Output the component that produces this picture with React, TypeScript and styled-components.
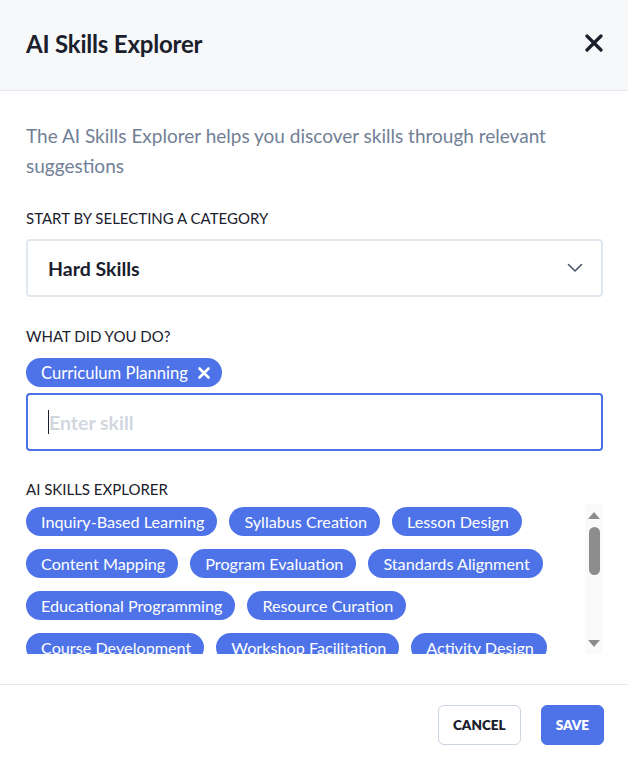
import React from "react";
import styled, { createGlobalStyle } from "styled-components";

const GlobalStyle = createGlobalStyle`
  html, body { margin: 0; padding: 0; background: #ffffff; }
  body { font-family: Lato, "Liberation Sans", sans-serif; color: #1a202c; }
  * { box-sizing: border-box; }
`;

const BLUE = "#4e73e8";

const Modal = styled.div`
  width: 628px;
  min-height: 760px;
  display: flex;
  flex-direction: column;
  background: #fff;
`;

const Header = styled.header`
  height: 91px;
  background: #f7f8fa;
  border-bottom: 1px solid #e2e8f0;
  display: flex;
  align-items: center;
  justify-content: space-between;
  padding: 0 25px 4px 26px;
`;

const Title = styled.h1`
  margin: 0;
  font-size: 24px;
  font-weight: 700;
  color: #1a202c;
  letter-spacing: -0.2px;
`;

const CloseButton = styled.button`
  border: 0;
  background: none;
  padding: 0;
  width: 18px;
  height: 18px;
  display: flex;
  color: #1a202c;
  cursor: pointer;
`;

const Body = styled.main`
  padding: 30px 25px 30px 26px;
  display: flex;
  flex-direction: column;
  border-bottom: 1px solid #e2e8f0;
`;

const Description = styled.p`
  margin: 0 0 27px;
  font-size: 19px;
  line-height: 30px;
  color: #718096;
`;

const Label = styled.div<{ $gap: number }>`
  font-size: 15px;
  line-height: 20px;
  text-transform: uppercase;
  color: #1a202c;
  margin-bottom: ${(p) => p.$gap}px;
`;

const Select = styled.div`
  height: 58px;
  border: 2px solid #e2e8f0;
  border-radius: 4px;
  display: flex;
  align-items: center;
  justify-content: space-between;
  padding: 0 18px 0 20px;
  margin-bottom: 29px;
  font-size: 19.5px;
  font-weight: 700;
  color: #1a202c;
`;

const Chevron = styled.svg`
  width: 16px;
  height: 16px;
  color: #4a5568;
`;

const TagRow = styled.div`
  display: flex;
  margin-bottom: 6px;
`;

const Chip = styled.span<{ $removable?: boolean }>`
  display: inline-flex;
  align-items: center;
  gap: 9px;
  height: 29px;
  padding: 0 ${(p) => (p.$removable ? 11 : 13)}px 0 15px;
  border-radius: 15px;
  background: ${BLUE};
  color: #fff;
  font-size: ${(p) => (p.$removable ? 16.6 : 16.2)}px;
  white-space: nowrap;
`;

const RemoveIcon = styled.svg`
  width: 14px;
  height: 14px;
`;

const InputBox = styled.label`
  height: 58px;
  border: 2px solid #4a72e0;
  border-radius: 4px;
  display: flex;
  align-items: center;
  padding: 0 20px;
  margin-bottom: 28px;
`;

const Caret = styled.span`
  width: 1px;
  height: 24px;
  background: #1a202c;
  flex: none;
`;

const Input = styled.input`
  flex: 1;
  border: 0;
  outline: none;
  padding: 0;
  font-family: inherit;
  font-size: 19.5px;
  font-weight: 700;
  color: #1a202c;
  caret-color: transparent;
  background: transparent;
  &::placeholder { color: #d2d7df; }
`;

const SuggestionRow = styled.div`
  display: flex;
  height: 150px;
  margin-top: -15px;
`;

const ChipViewport = styled.div`
  flex: 1;
  overflow: hidden;
  padding-top: 3px;
  margin-right: 1px;
`;

const ChipGrid = styled.div`
  display: flex;
  flex-wrap: wrap;
  column-gap: 12px;
  row-gap: 13px;
`;

const ScrollTrack = styled.div`
  width: 18px;
  flex: none;
  background: #fafafa;
  display: flex;
  flex-direction: column;
  align-items: center;
  padding: 8px 0 7px;
`;

const Arrow = styled.span<{ $down?: boolean }>`
  width: 0;
  height: 0;
  border-left: 6px solid transparent;
  border-right: 6px solid transparent;
  ${(p) =>
    p.$down
      ? "border-top: 7px solid #8d8d8d; margin-top: auto;"
      : "border-bottom: 7px solid #8d8d8d;"}
`;

const Thumb = styled.span`
  width: 11px;
  height: 48px;
  margin-top: 8px;
  border-radius: 6px;
  background: #8d8d8d;
`;

const Footer = styled.footer`
  display: flex;
  justify-content: flex-end;
  gap: 20px;
  padding: 20px 24px 20px 26px;
`;

const Button = styled.button<{ $primary?: boolean }>`
  height: 40px;
  padding: 0 14px;
  border-radius: 6px;
  border: 1px solid ${(p) => (p.$primary ? BLUE : "#cbd5e0")};
  background: ${(p) => (p.$primary ? BLUE : "#fff")};
  color: ${(p) => (p.$primary ? "#fff" : "#1a202c")};
  font-family: inherit;
  font-size: 13.5px;
  font-weight: 800;
  letter-spacing: 0;
  text-transform: uppercase;
  cursor: pointer;
`;

const suggestions = [
  "Inquiry-Based Learning",
  "Syllabus Creation",
  "Lesson Design",
  "Content Mapping",
  "Program Evaluation",
  "Standards Alignment",
  "Educational Programming",
  "Resource Curation",
  "Course Development",
  "Workshop Facilitation",
  "Activity Design",
  "Assessment Design",
  "Learning Outcomes",
];

export default function App() {
  return (
    <>
      <GlobalStyle />
      <Modal>
        <Header>
          <Title>AI Skills Explorer</Title>
          <CloseButton aria-label="Close">
            <svg viewBox="0 0 18 18" width="18" height="18">
              <path d="M2 2 L16 16 M16 2 L2 16" stroke="currentColor" strokeWidth="3.2" strokeLinecap="round" />
            </svg>
          </CloseButton>
        </Header>
        <Body>
          <Description>
            The AI Skills Explorer helps you discover skills through relevant suggestions
          </Description>
          <Label $gap={11}>Start by selecting a category</Label>
          <Select>
            <span>Hard Skills</span>
            <Chevron viewBox="0 0 16 16">
              <path d="M1.5 4.5 L8 11 L14.5 4.5" fill="none" stroke="currentColor" strokeWidth="1.6" strokeLinecap="round" strokeLinejoin="round" />
            </Chevron>
          </Select>
          <Label $gap={12}>What did you do?</Label>
          <TagRow>
            <Chip $removable>
              Curriculum Planning
              <RemoveIcon viewBox="0 0 14 14">
                <path d="M2.5 2.5 L11.5 11.5 M11.5 2.5 L2.5 11.5" stroke="currentColor" strokeWidth="2.6" strokeLinecap="round" />
              </RemoveIcon>
            </Chip>
          </TagRow>
          <InputBox>
            <Caret />
            <Input placeholder="Enter skill" />
          </InputBox>
          <Label $gap={20}>AI Skills Explorer</Label>
          <SuggestionRow>
            <ChipViewport>
              <ChipGrid>
                {suggestions.map((s) => (
                  <Chip key={s}>{s}</Chip>
                ))}
              </ChipGrid>
            </ChipViewport>
            <ScrollTrack aria-hidden>
              <Arrow />
              <Thumb />
              <Arrow $down />
            </ScrollTrack>
          </SuggestionRow>
        </Body>
        <Footer>
          <Button>Cancel</Button>
          <Button $primary>Save</Button>
        </Footer>
      </Modal>
    </>
  );
}
